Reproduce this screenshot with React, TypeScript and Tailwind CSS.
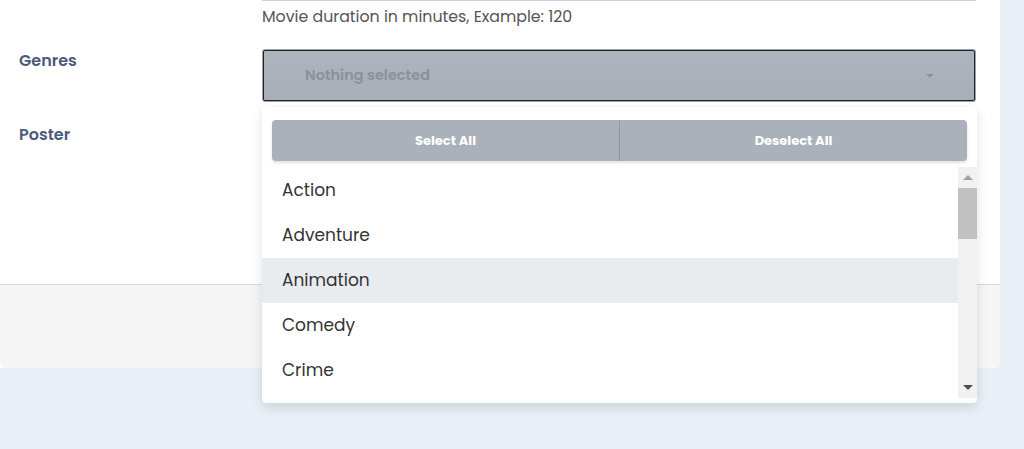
import { useState } from "react";

const genres = ["Action", "Adventure", "Animation", "Comedy", "Crime"];

function FieldLabel({ text }: { text: string }) {
  return <div className="w-[262px] pl-[19px] text-[16px] leading-[22px] font-semibold text-[#4b5b7d]">{text}</div>;
}

function GenreSelect() {
  const [hovered] = useState("Animation");

  return (
    <div className="relative w-[714px]">
      {/* toggle */}
      <div className="rounded-[3px] p-px bg-[#9ca3ad]">
        <div className="flex h-[51px] items-center justify-between rounded-[2px] border border-[#222] bg-gradient-to-b from-[#adb4bd] to-[#a8aeb8] pl-[41px] pr-[40px]">
          <span className="text-[14.5px] font-semibold text-[#8c9097]">Nothing selected</span>
          <span className="h-0 w-0 border-x-[4px] border-t-[4px] border-x-transparent border-t-[#8c9097]" />
        </div>
      </div>

      {/* menu */}
      <div className="absolute left-0 top-[58px] z-10 w-[715px] rounded-b-[4px] bg-white shadow-[0_4px_12px_rgba(0,0,0,0.12)]">
        <div className="flex px-[10px] pt-[13px] pb-[6px]">
          <div className="flex h-[41px] flex-1 items-center justify-center rounded-l-[4px] border-r border-[#9aa1ab] bg-[#aab1bb] text-[13px] font-bold text-white shadow-[0_2px_3px_rgba(0,0,0,0.12)]">
            Select All
          </div>
          <div className="flex h-[41px] flex-1 items-center justify-center rounded-r-[4px] bg-[#aab1bb] text-[13px] font-bold text-white shadow-[0_2px_3px_rgba(0,0,0,0.12)]">
            Deselect All
          </div>
        </div>
        <div className="mb-[5px] flex h-[231px] overflow-hidden">
          <ul className="flex-1 pt-px">
            {genres.map((g) => (
              <li
                key={g}
                className={`flex h-[45px] items-center px-[20px] text-[17px] text-[#333] ${g === hovered ? "bg-[#e9ecef]" : ""}`}
              >
                {g}
              </li>
            ))}
          </ul>
          <div className="flex w-[19px] flex-col items-center bg-[#f1f1f1]">
            <div className="flex h-[21px] items-center justify-center">
              <span className="h-0 w-0 border-x-[5px] border-b-[5px] border-x-transparent border-b-[#a3a3a3]" />
            </div>
            <div className="h-[51px] w-[19px] bg-[#c1c1c1]" />
            <div className="flex-1" />
            <div className="flex h-[21px] items-center justify-center">
              <span className="h-0 w-0 border-x-[5px] border-t-[5px] border-x-transparent border-t-[#505050]" />
            </div>
          </div>
        </div>
      </div>
    </div>
  );
}

export default function App() {
  return (
    <div className="h-[449px] overflow-hidden bg-[#e9eff7] font-['Poppins','Inter',sans-serif]">
      <div className="w-[1000px] rounded-br-[6px] bg-white">
        <div className="h-[284px]">
          <div className="ml-[262px] w-[714px] border-t border-[#d4d4d4]" />
          <div className="pl-[262px] pt-[4px] text-[15.8px] leading-[24px] text-[#555]">Movie duration in minutes, Example: 120</div>
          <div className="mt-[20px] flex">
            <div className="pt-px">
              <FieldLabel text="Genres" />
            </div>
            <GenreSelect />
          </div>
          <div className="mt-[22px]">
            <FieldLabel text="Poster" />
          </div>
        </div>
        <div className="h-[84px] rounded-b-[6px] border-t border-[#d9d9d9] bg-[#f5f5f5]" />
      </div>
    </div>
  );
}
